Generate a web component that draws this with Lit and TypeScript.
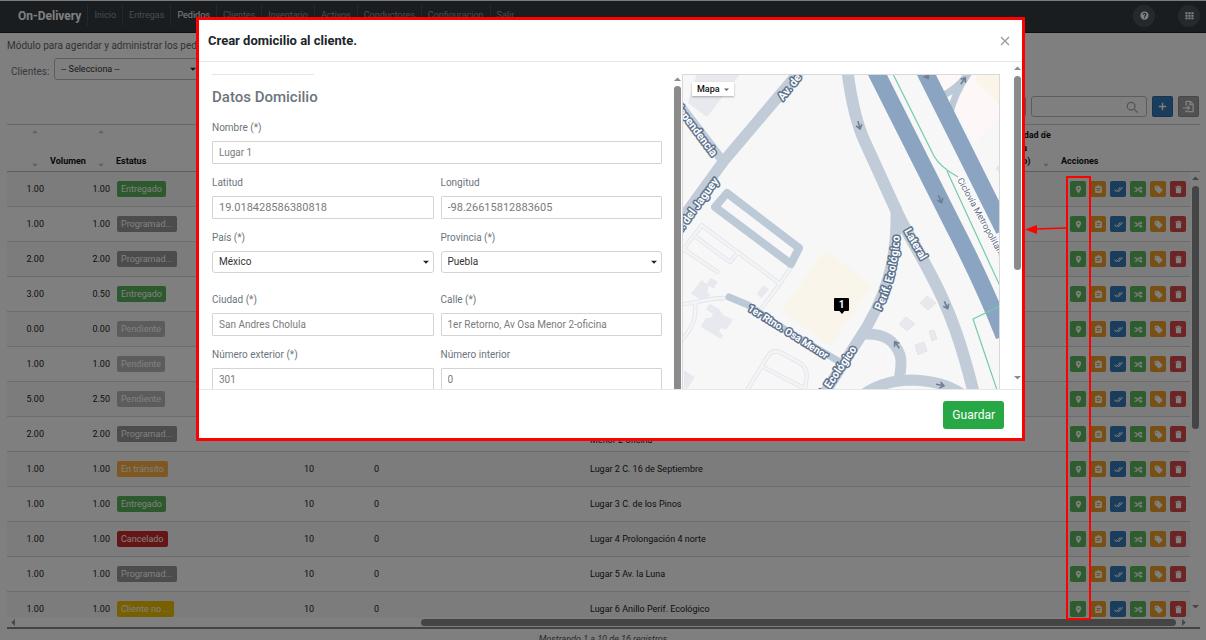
import { LitElement, html, svg, css } from "lit";
import { customElement } from "lit/decorators.js";
import { classMap } from "lit/directives/class-map.js";

interface Row {
  qty: string;
  volume: string;
  status: string;
  kind: string;
  a: string;
  b: string;
  place: string;
}

const row = (qty: string, volume: string, status: string, kind: string, place = "", a = "10", b = "0"): Row => ({
  qty, volume, status, kind, a, b, place,
});

const ROWS: Row[] = [
  row("1.00", "1.00", "Entregado", "done"),
  row("1.00", "1.00", "Programad...", "planned"),
  row("2.00", "2.00", "Programad...", "planned"),
  row("3.00", "0.50", "Entregado", "done"),
  row("0.00", "0.00", "Pendiente", "pending"),
  row("1.00", "1.00", "Pendiente", "pending"),
  row("5.00", "2.50", "Pendiente", "pending"),
  row("2.00", "2.00", "Programad...", "planned", "Lugar 1 1er Retorno, Av Osa Menor 2-oficina"),
  row("1.00", "1.00", "En tránsito", "transit", "Lugar 2 C. 16 de Septiembre"),
  row("1.00", "1.00", "Entregado", "done", "Lugar 3 C. de los Pinos"),
  row("1.00", "1.00", "Cancelado", "cancelled", "Lugar 4 Prolongación 4 norte"),
  row("1.00", "1.00", "Programad...", "planned", "Lugar 5 Av. la Luna"),
  row("1.00", "1.00", "Cliente no ...", "absent", "Lugar 6 Anillo Perif. Ecológico"),
];

const NAV = ["Inicio", "Entregas", "Pedidos", "Clientes", "Inventario", "Activos", "Conductores", "Configuracion", "Salir"];

const ACTIONS = [
  { name: "Domicilio", tone: "green", icon: svg`<path fill-rule="evenodd" d="M12 2a7 7 0 0 0-7 7c0 5 7 13 7 13s7-8 7-13a7 7 0 0 0-7-7zm0 4.500a2.500 2.500 0 1 1 0 5 2.500 2.500 0 0 1 0-5z"/>` },
  { name: "Detalle", tone: "amber", icon: svg`<path fill-rule="evenodd" d="M19 3h-4a3 3 0 0 0-6 0H5a2 2 0 0 0-2 2v14a2 2 0 0 0 2 2h14a2 2 0 0 0 2-2V5a2 2 0 0 0-2-2zM7 8h10v3H7zm0 5h8v3H7z"/>` },
  { name: "Confirmar", tone: "blue", icon: svg`<path d="M18 7l-1.600-1.600-6.300 6.300 1.600 1.600zm4.200-1.600L11.700 16l-4.200-4.200L6 13.400l5.700 5.600L23.800 7zM.4 13.400L6 19l1.600-1.600L2 11.800z"/>` },
  { name: "Reasignar", tone: "green", icon: svg`<path d="M1 6h5l3 4-2 2.500L4.700 9H1zm0 9h4L13 6h4V3l6 5-6 5V9h-2l-8 9H1zm11-1l2-2.500 1.500 3.500H17v-3l6 5-6 5v-4h-3z"/>` },
  { name: "Etiqueta", tone: "amber", icon: svg`<path fill-rule="evenodd" d="M2 4a2 2 0 0 1 2-2h8l10 10a2 2 0 0 1 0 3l-7 7a2 2 0 0 1-3 0L2 12zm4.500 1a1.500 1.500 0 1 0 0 3 1.500 1.500 0 0 0 0-3z"/>` },
  { name: "Eliminar", tone: "red", icon: svg`<path d="M5 8h14v12a2 2 0 0 1-2 2H7a2 2 0 0 1-2-2zM4 4h4l1-2h6l1 2h4v3H4z"/>` },
];

const triangle = (dir: "up" | "down" | "left" | "right") => {
  const d = { up: "M0 7L5 2l5 5z", down: "M0 3l5 5 5-5z", left: "M7 0L2 5l5 5z", right: "M3 0l5 5-5 5z" }[dir];
  return html`<svg viewBox="0 0 10 10" aria-hidden="true"><path d=${d} fill="currentColor" /></svg>`;
};

@customElement("city-map")
class CityMap extends LitElement {
  static styles = css`
    :host { display: block; overflow: hidden; position: relative; border: 1px solid #d9d9d9; border-bottom: 0; background: #f7f7f7; }
    .canvas { display: block; width: 100%; height: 100%; }
    .kind { position: absolute; left: 9px; top: 7px; display: flex; align-items: center; gap: 4px; padding: 0 5px; height: 14px; border: 0; background: #fff; color: #111; box-shadow: 0 1px 2px rgba(0,0,0,.3); font: 500 9px/14px Roboto, sans-serif; }
    .kind svg { width: 5px; height: 5px; color: #666; }
    .street { font: 700 11px Roboto, sans-serif; fill: #fff; stroke: #5d728d; stroke-width: 3px; paint-order: stroke; stroke-linejoin: round; }
    .small { font-size: 10px; }
    .cycle { font: 400 9px Roboto, sans-serif; fill: #5f7186; stroke: #fff; stroke-width: 2px; paint-order: stroke; }
    .pin { font: 700 10px Roboto, sans-serif; fill: #fff; }
  `;

  private arrow(x: number, y: number, angle: number) {
    return svg`<path transform="translate(${x} ${y}) rotate(${angle})" d="M-4 0H3M0 -3L4 0L0 3" fill="none" stroke="#6e7e91" stroke-width="1.600"/>`;
  }

  render() {
    return html`
      <svg class="canvas" viewBox="683 75 316 314" preserveAspectRatio="xMinYMin slice" role="img" aria-label="Mapa del domicilio">
        <path d="M936 74H1000V115L974 143z" fill="#fdf8f7" />
        <path d="M979 74H1000V105L975 80z" fill="#faf5e8" />
        <path d="M825 250L872 285L830 346L782 311z" fill="#faf5ea" />
        <g fill="#e8e9ef">
          <path d="M697 74H740L707 117L688 103z" />
          <path d="M927 296l9 7-8 7-8-7z M906 317l9 7-8 7-8-7z M929 331l5-1 3 9-5 2z M915 345l9-3 3 9-9 4z M996 168l4-3v8z" stroke="#dcdee6" stroke-width=".6" />
        </g>
        <g transform="translate(670 222) scale(.3333)">
          <path fill="#e8e9ef" d="M95 173l20 18-2 20 8 8-23 18-35-22z M122 167l21 12-12 21-22-13z M280 190l17 12-22 26-15-12z M120 246l28 15 10 17 31 15-20 30-15-6-7 10 12 14-7 9-60-36 15-26 15 0 8-12-23-14z M42 445l32 20-22 35H42z" />
          <g fill="none" stroke-linecap="round" stroke-linejoin="round">
            <path d="M30 95L95 10L330 185L268 268M365 133L330 185M75 43L180 120L205 90M42 82L142 150M30 247C90 245 100 228 165 228M76 245C80 300 60 325 30 362M225 515L295 400Q310 380 335 393L385 420Q412 435 410 465L403 515M276 433L405 500" stroke="#e1e5ea" stroke-width="13" />
            <path d="M30 95L95 10L330 185L268 268M365 133L330 185M75 43L180 120L205 90M42 82L142 150M30 247C90 245 100 228 165 228M76 245C80 300 60 325 30 362M225 515L295 400Q310 380 335 393L385 420Q412 435 410 465L403 515M276 433L405 500" stroke="#f2f4f6" stroke-width="8" />
          </g>
        </g>
        <g fill="none" stroke="#bcc9d7" stroke-linecap="round" stroke-linejoin="round">
          <path d="M727 193L715 207L791 264L799 248z" stroke-width="8" />
          <path d="M729 297L748 305L787 331L840 362" stroke-width="7" />
          <path d="M940 97Q960 88 970 70M949 116Q955 92 968 74" stroke-width="7" />
        </g>
        <g fill="none" stroke="#c1ccd8" stroke-width="11" stroke-linejoin="round">
          <path d="M805 65L723 162L675 228" />
          <path d="M676 100L722 160" stroke-width="9" />
          <path d="M847 68C851 100 857 125 865 142L896 210C902 224 918 250 930 273C950 310 962 345 974 394" stroke-width="12" />
          <path d="M896 206C897 245 893 280 868 325L824 394" />
          <path d="M864 334C885 333 895 341 900 355C903 365 899 375 899 384" />
          <path d="M864 394C880 383 895 380 912 380C935 381 948 385 962 394" />
        </g>
        <g fill="none" stroke="#8aa4c1" stroke-width="17">
          <path d="M872 64L952 223Q984 285 1004 336" />
          <path d="M921 64L1004 230" />
        </g>
        <path d="M893 74L934 156Q940 167 958 177M947 171L1000 286M1000 306L973 319L997 390" fill="none" stroke="#74cba9" stroke-width="1.200" />
        ${this.arrow(859, 125, 75)} ${this.arrow(940, 199, 68)} ${this.arrow(946, 305, 65)}
        ${this.arrow(897, 345, 235)} ${this.arrow(940, 385, 10)} ${this.arrow(963, 81, 305)} ${this.arrow(926, 75, 60)}
        <text class="street" transform="translate(783 101) rotate(-51)">Av. de</text>
        <text class="street" transform="translate(712 157) rotate(53)" text-anchor="end">Independencia</text>
        <text class="street" transform="translate(719 181) rotate(-54)" text-anchor="end">Av. del Jaguey</text>
        <text class="street small" transform="translate(747 310) rotate(32)">1er Rtno. Osa Menor</text>
        <text class="street" transform="translate(857 349) rotate(-56)" text-anchor="end">Perif. Ecológico</text>
        <path id="ring" d="M881 311C893 285 900 260 900 220" fill="none" />
        <text class="street"><textPath href="#ring">Perif. Ecológico</textPath></text>
        <text class="street" transform="translate(904 231) rotate(60)">Lateral</text>
        <text class="cycle" transform="translate(957 180) rotate(61)">Ciclovía Metropolitana</text>
        <path d="M835 298h13q1 0 1 1v11q0 1-1 1h-3.500l-2.500 3-2.500-3h-4.500q-1 0-1-1v-11q0-1 1-1z" fill="#000" />
        <text class="pin" x="841.500" y="308" text-anchor="middle">1</text>
      </svg>
      <button class="kind" type="button">Mapa ${triangle("down")}</button>
    `;
  }
}

@customElement("address-dialog")
class AddressDialog extends LitElement {
  static styles = css`
    :host { display: flex; flex-direction: column; border: 3px solid #f00; background: #fff; color: #6c757d; font: 10px/16px Roboto, sans-serif; box-sizing: border-box; }
    * { box-sizing: border-box; }
    .head { display: flex; align-items: center; justify-content: space-between; padding: 0 11px 0 9px; height: 42px; border-bottom: 1px solid #e5e7e9; }
    .title { margin: 0; font-size: 13px; line-height: 18px; font-weight: 700; color: #212529; }
    .close { display: flex; padding: 0; border: 0; background: none; }
    .close svg { width: 12px; height: 12px; }
    .body { display: grid; grid-template-columns: minmax(0, 1fr) 9px minmax(0, 318px) 12px 10px; height: 327px; overflow: hidden; }
    .form { display: grid; grid-template-columns: 1fr 1fr; column-gap: 7px; align-content: start; padding: 12px 11px 0 13px; overflow: hidden; }
    .rule { grid-column: 1 / -1; width: 102px; height: 1px; margin: 0; border: 0; background: #e3e5e7; }
    .section { grid-column: 1 / -1; margin: 12px 0 13px; font-size: 15px; line-height: 20px; font-weight: 500; color: #6c757d; }
    .field { display: flex; flex-direction: column; gap: 5px; padding-bottom: 11px; min-width: 0; }
    .wide { grid-column: 1 / -1; }
    .loose { padding-bottom: 19px; }
    .input, .select { width: 100%; height: 23px; margin: 0; padding: 0 6px; border: 1px solid #d2d4d6; border-radius: 1px; background: #fff; color: #7b7b7b; font: 10px/16px Roboto, sans-serif; }
    .coordinate .input { font-size: 11px; }
    .pick { display: grid; align-items: center; }
    .pick > * { grid-area: 1 / 1; }
    .select { height: 22px; appearance: none; border-radius: 3px; color: #333; }
    .pick svg { width: 6px; height: 6px; margin-right: 5px; justify-self: end; color: #222; pointer-events: none; }
    .bar { display: flex; flex-direction: column; align-items: center; gap: 4px; background: #fcfcfc; color: #8b8b8b; }
    .bar svg { width: 7px; height: 7px; flex: none; }
    .inner { margin-top: 12px; padding-top: 2px; gap: 3px; }
    .outer { grid-column: 5; padding: 3px 0; }
    .thumb { width: 7px; border-radius: 4px; background: #8b8b8b; }
    .inner .thumb { flex: 1; border-radius: 4px 4px 0 0; }
    .outer .thumb { height: 194px; }
    .outer .end { margin-top: auto; }
    .map { margin-top: 12px; }
    .foot { display: flex; justify-content: flex-end; align-items: center; height: 49px; padding: 2px 18px 0 0; border-top: 1px solid #e5e7e9; }
    .save { height: 28px; padding: 0 9px; border: 0; border-radius: 3px; background: #28a745; color: #fff; font: 12px/18px Roboto, sans-serif; }
    @media (max-width: 800px) { .body { grid-template-columns: minmax(0, 1fr) 9px 30% 2px 10px; } }
  `;

  private text(id: string, label: string, value: string, extra = "") {
    return html`<div class=${classMap({ field: true, wide: extra === "wide", coordinate: extra === "coordinate" })}>
      <label for=${id}>${label}</label><input class="input" id=${id} .value=${value} />
    </div>`;
  }

  private pick(id: string, label: string, value: string) {
    return html`<div class="field loose">
      <label for=${id}>${label}</label>
      <div class="pick"><select class="select" id=${id}><option>${value}</option></select>${triangle("down")}</div>
    </div>`;
  }

  render() {
    return html`
      <header class="head">
        <h2 class="title">Crear domicilio al cliente.</h2>
        <button class="close" type="button" aria-label="Cerrar">
          <svg viewBox="0 0 12 12"><path d="M2 2l8 8M10 2l-8 8" stroke="#9a9a9a" stroke-width="1.300" /></svg>
        </button>
      </header>
      <div class="body">
        <form class="form">
          <hr class="rule" />
          <h3 class="section">Datos Domicilio</h3>
          ${this.text("name", "Nombre (*)", "Lugar 1", "wide")}
          ${this.text("lat", "Latitud", "19.018428586380818", "coordinate")}
          ${this.text("lng", "Longitud", "-98.26615812883605", "coordinate")}
          ${this.pick("country", "País (*)", "México")}
          ${this.pick("state", "Provincia (*)", "Puebla")}
          ${this.text("city", "Ciudad (*)", "San Andres Cholula")}
          ${this.text("street", "Calle (*)", "1er Retorno, Av Osa Menor 2-oficina")}
          ${this.text("outer", "Número exterior (*)", "301")}
          ${this.text("inner", "Número interior", "0")}
        </form>
        <div class="bar inner">${triangle("up")}<div class="thumb"></div></div>
        <city-map class="map"></city-map>
        <div class="bar outer">${triangle("up")}<div class="thumb"></div><span class="end">${triangle("down")}</span></div>
      </div>
      <footer class="foot"><button class="save" type="button">Guardar</button></footer>
    `;
  }
}

@customElement("app-root")
class AppRoot extends LitElement {
  static styles = css`
    :host { display: block; position: relative; height: 100vh; overflow: hidden; background: #fff; color: #222; font: 9px/13px Roboto, sans-serif; }
    * { box-sizing: border-box; }
    .nav { display: flex; align-items: center; height: 33px; padding: 0 6px 2px 18px; border-top: 1px solid #f4f8fa; border-bottom: 1px solid #1d2124; background: #343a40; }
    .brand { padding-right: 6px; font-size: 12px; line-height: 24px; font-weight: 700; color: #fff; }
    .links { display: flex; flex: 1; min-width: 0; margin: 0; padding: 0; list-style: none; }
    .link { display: block; padding: 0 6px; border-left: 1px solid #4a4f54; line-height: 21px; color: #94989c; text-decoration: none; }
    .link.active { color: #fff; }
    .tools { display: flex; gap: 23px; }
    .round { display: grid; place-items: center; width: 22px; height: 22px; padding: 0; border: 0; border-radius: 50%; background: #4c5258; }
    .round svg { width: 9px; height: 9px; fill: #fff; }
    .intro { margin: 0; padding: 5px 7px 0; font-size: 10px; line-height: 16px; color: #666; }
    .filter { display: flex; align-items: center; gap: 5px; padding: 4px 11px 0; font-size: 10px; line-height: 16px; color: #6c757d; }
    .filter label { padding-top: 5px; }
    .pick { display: grid; align-items: center; width: 150px; }
    .pick > * { grid-area: 1 / 1; }
    .pick svg { width: 6px; height: 6px; margin-right: 8px; justify-self: end; color: #222; pointer-events: none; }
    .select { width: 100%; height: 22px; padding: 0 6px; appearance: none; border: 1px solid #bbb; border-radius: 3px; background: #fff; color: #333; font: 9px/16px Roboto, sans-serif; }
    .toolbar { display: flex; justify-content: flex-end; align-items: center; gap: 5px; padding: 16px 7px 7px; }
    .length { width: 60px; height: 21px; border: 1px solid #aaa; border-radius: 3px; background: #fff; appearance: none; }
    .search { display: grid; align-items: center; width: 116px; }
    .search > * { grid-area: 1 / 1; }
    .search svg { width: 12px; height: 12px; margin-right: 9px; justify-self: end; fill: none; stroke: #aaa; stroke-width: 1.500; }
    .box { width: 100%; height: 21px; border: 1px solid #bbb; border-radius: 3px; background: #fff; font: 10px Roboto, sans-serif; }
    .tool { display: grid; place-items: center; width: 21px; height: 21px; padding: 0; border: 1px solid rgba(0,0,0,.12); border-radius: 2px; background: #337ab7; color: #fff; }
    .tool.grey { background: #a3a3a3; }
    .tool svg { width: 13px; height: 13px; fill: none; stroke: #fff; stroke-width: 1.500; }
    .grid { display: grid; grid-template-columns: minmax(0, 1fr) 10px; margin: 0 6px 0 7px; border-bottom: 2px solid #888; }
    .clip { height: 493px; overflow: hidden; }
    .table { width: 100%; table-layout: fixed; border-collapse: separate; border-spacing: 0; }
    .c1 { width: 40px; } .c2 { width: 66px; } .c3 { width: 188px; } .c4 { width: 70px; } .c5 { width: 216px; } .c7 { width: 65px; } .c8 { width: 132px; }
    .table th { height: 48px; padding: 3px; border-top: 1px solid #ccc; border-bottom: 1px solid #bbb; text-align: left; vertical-align: bottom; font-weight: 700; white-space: nowrap; color: #111; }
    .headcell { display: flex; align-items: flex-end; justify-content: space-between; padding-right: 6px; }
    .sort { display: flex; flex-direction: column; justify-content: space-between; height: 39px; color: #b5c6d4; }
    .sort svg { width: 6px; height: 6px; display: block; }
    .end-only { justify-content: flex-end; }
    .headtext { flex: 1; min-width: 0; }
    .table td { height: 35px; padding: 0 3px; border-bottom: 1px solid #d9d9d9; }
    .table tr:nth-child(odd) td { background: #f9f9f9; }
    .table td.num { text-align: right; }
    .badge { display: inline-block; margin-left: 1px; padding: 0 4px; border-radius: 2px; color: #fff; line-height: 16px; vertical-align: middle; }
    .done { background: #58b35a; } .planned { background: #999; } .pending { background: #b9b9b9; } .transit { background: #ffae42; } .cancelled { background: #c92a2a; } .absent { background: #f0c000; }
    .place { max-width: 126px; }
    .actions { display: flex; gap: 4px; padding-left: 9px; }
    .act { display: grid; place-items: center; width: 16px; height: 16px; padding: 0; border: 0; border-radius: 2px; }
    .act svg { width: 9px; height: 9px; fill: #fff; }
    .green { background: #5cb85c; } .amber { background: #f0a02c; } .blue { background: #337ab7; } .red { background: #d9484a; }
    .side { display: flex; flex-direction: column; border-top: 1px solid #ccc; color: #8b8b8b; }
    .gap { height: 47px; border-bottom: 1px solid #bbb; }
    .track { display: flex; flex: 1; flex-direction: column; align-items: center; gap: 4px; padding: 3px 0; }
    .track svg, .across svg { width: 7px; height: 7px; flex: none; }
    .thumb { width: 7px; height: 243px; border-radius: 4px; background: #8b8b8b; }
    .end { margin-top: auto; }
    .across { display: flex; align-items: center; gap: 4px; height: 10px; padding: 0 3px; color: #8b8b8b; }
    .across .thumb { flex: 1; height: 7px; margin-left: 34%; }
    .count { margin: 0; padding-top: 4px; text-align: center; font-style: italic; color: #555; }
    .shade { position: absolute; inset: 0; background: rgba(0,0,0,.5); }
    .modal { position: absolute; top: 17px; left: 196px; right: 181px; z-index: 2; }
    .mark { position: absolute; z-index: 2; top: 176px; right: 115px; width: 25px; height: 444px; border: 2px solid #f00; }
    .pointer { position: absolute; z-index: 3; top: 223px; right: 140px; width: 41px; height: 12px; }
    @media (max-width: 800px) { .modal { left: 12px; } }
  `;

  private sort() {
    return html`<span class="sort">${triangle("up")}${triangle("down")}</span>`;
  }

  render() {
    return html`
      <nav class="nav">
        <span class="brand">On-Delivery</span>
        <ul class="links">
          ${NAV.map((n) => html`<li><a href="#" class=${classMap({ link: true, active: n === "Pedidos" })}>${n}</a></li>`)}
        </ul>
        <div class="tools">
          <button class="round" type="button" aria-label="Ayuda">
            <svg viewBox="0 0 24 24"><path fill-rule="evenodd" d="M12 1a11 11 0 1 0 0 22 11 11 0 0 0 0-22zm-1.500 15.500h3v3h-3zM7 9.500C7 6.500 9 4.500 12 4.500s5 2 5 4.500-3 3.500-3 6h-3.500c0-3.500 3-4 3-6 0-1-.6-1.500-1.500-1.500S10.300 8 10.300 9.500z" /></svg>
          </button>
          <button class="round" type="button" aria-label="Aplicaciones">
            <svg viewBox="0 0 24 24"><path d="M1 3h6v5H1zM9 3h6v5H9zM17 3h6v5h-6zM1 10h6v5H1zM9 10h6v5H9zM17 10h6v5h-6zM1 17h6v5H1zM9 17h6v5H9zM17 17h6v5h-6z" /></svg>
          </button>
        </div>
      </nav>
      <p class="intro">Módulo para agendar y administrar los pedidos.</p>
      <div class="filter">
        <label for="client">Clientes:</label>
        <div class="pick"><select class="select" id="client"><option>-- Selecciona --</option></select>${triangle("down")}</div>
      </div>
      <div class="toolbar">
        <select class="length" aria-label="Registros por página"><option></option></select>
        <div class="search">
          <input class="box" type="search" aria-label="Buscar" />
          <svg viewBox="0 0 14 14"><circle cx="6" cy="6" r="4.500" /><path d="M9.500 9.500l4 4" /></svg>
        </div>
        <button class="tool" type="button" aria-label="Agregar"><svg viewBox="0 0 14 14"><path d="M7 3v8M3 7h8" /></svg></button>
        <button class="tool grey" type="button" aria-label="Exportar">
          <svg viewBox="0 0 14 14"><path d="M4.500 6V1.500H9l3 3v8H4.500V11M1 8.500h7M6 6.500l2 2-2 2M8.500 1.500V5H12" /></svg>
        </button>
      </div>
      <div class="grid">
        <div class="clip">
          <table class="table">
            <colgroup><col class="c1" /><col class="c2" /><col class="c3" /><col class="c4" /><col class="c5" /><col /><col class="c7" /><col class="c8" /></colgroup>
            <thead>
              <tr>
                <th><div class="headcell end-only">${this.sort()}</div></th>
                <th><div class="headcell">Volumen ${this.sort()}</div></th>
                <th>Estatus</th><th></th><th></th><th></th>
                <th><div class="headcell"><span class="headtext">Capacidad de<br />entrega<br />(tiempo)</span>${this.sort()}</div></th>
                <th>Acciones</th>
              </tr>
            </thead>
            <tbody>
              ${ROWS.map((r) => html`<tr>
                <td class="num">${r.qty}</td>
                <td class="num">${r.volume}</td>
                <td><span class="badge ${r.kind}">${r.status}</span></td>
                <td>${r.a}</td>
                <td>${r.b}</td>
                <td><div class="place">${r.place}</div></td>
                <td></td>
                <td><div class="actions">${ACTIONS.map((a) => html`<button type="button" class="act ${a.tone}" aria-label=${a.name}><svg viewBox="0 0 24 24">${a.icon}</svg></button>`)}</div></td>
              </tr>`)}
            </tbody>
          </table>
        </div>
        <div class="side">
          <div class="gap"></div>
          <div class="track">${triangle("up")}<div class="thumb"></div><span class="end">${triangle("down")}</span></div>
        </div>
        <div class="across">${triangle("left")}<div class="thumb"></div>${triangle("right")}</div>
      </div>
      <p class="count">Mostrando 1 a 10 de 16 registros</p>
      <div class="shade"></div>
      <address-dialog class="modal" role="dialog" aria-label="Crear domicilio al cliente."></address-dialog>
      <div class="mark"></div>
      <svg class="pointer" viewBox="0 0 41 12" aria-hidden="true"><path d="M41 5L10 6" stroke="#f00" stroke-width="1.500" /><path d="M0 6.500L12 2v9z" fill="#f00" /></svg>
    `;
  }
}
